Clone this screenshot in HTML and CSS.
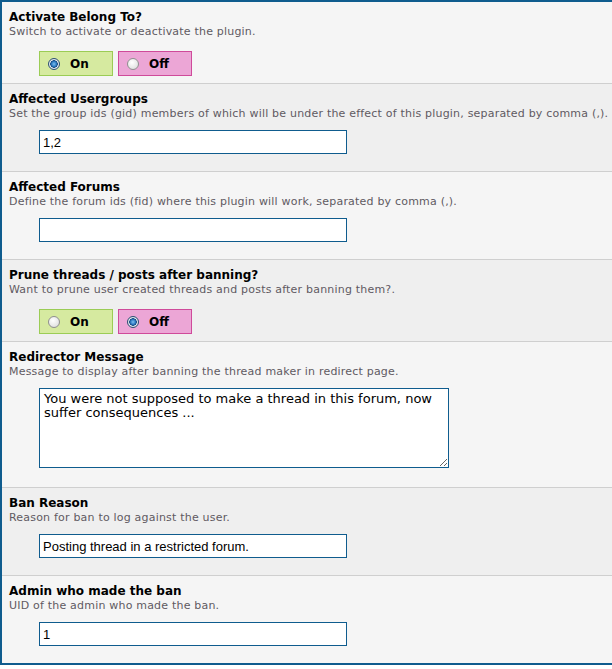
FILE: index.html
```html
<!DOCTYPE html>
<html lang="en">

<head>
    <meta charset="UTF-8">
    <meta name="viewport" content="width=device-width, initial-scale=1.0">
    <title>Plugin Settings</title>
    <link rel="stylesheet" href="styles.css">
</head>

<body>
    <form class="settings">
        <div class="row">
            <div class="title">Activate Belong To?</div>
            <div class="desc">Switch to activate or deactivate the plugin.</div>
            <div class="switch">
                <label class="choice on"><span class="radio checked"></span>On</label>
                <label class="choice off"><span class="radio"></span>Off</label>
            </div>
        </div>

        <div class="row">
            <div class="title">Affected Usergroups</div>
            <div class="desc">Set the group ids (gid) members of which will be under the effect of this plugin, separated by comma (,).</div>
            <input type="text" class="text-input" value="1,2">
        </div>

        <div class="row">
            <div class="title">Affected Forums</div>
            <div class="desc">Define the forum ids (fid) where this plugin will work, separated by comma (,).</div>
            <input type="text" class="text-input" value="">
        </div>

        <div class="row">
            <div class="title">Prune threads / posts after banning?</div>
            <div class="desc">Want to prune user created threads and posts after banning them?.</div>
            <div class="switch">
                <label class="choice on"><span class="radio"></span>On</label>
                <label class="choice off"><span class="radio checked"></span>Off</label>
            </div>
        </div>

        <div class="row">
            <div class="title">Redirector Message</div>
            <div class="desc">Message to display after banning the thread maker in redirect page.</div>
            <textarea class="text-area">You were not supposed to make a thread in this forum, now suffer consequences ...</textarea>
        </div>

        <div class="row">
            <div class="title">Ban Reason</div>
            <div class="desc">Reason for ban to log against the user.</div>
            <input type="text" class="text-input" value="Posting thread in a restricted forum.">
        </div>

        <div class="row">
            <div class="title">Admin who made the ban</div>
            <div class="desc">UID of the admin who made the ban.</div>
            <input type="text" class="text-input" value="1">
        </div>
    </form>
</body>

</html>
```

FILE: styles.css
```css
body {
    margin: 0;
    padding: 0;
    background-color: #fff;
    font-family: "DejaVu Sans", Verdana, sans-serif;
    overflow: hidden;
}

.settings {
    width: 640px;
    border-top: 2px solid #0f5c8e;
    border-left: 2px solid #0f5c8e;
    border-bottom: 2px solid #0f5c8e;
    box-shadow: 0 2px 0 #d4d4d4;
}

.row {
    padding: 8px 7px 6px;
    background-color: #f5f5f5;
    border-bottom: 1px solid #cfcfcf;
}

.row:nth-child(even) {
    background-color: #efefef;
}

.row:last-child {
    border-bottom: none;
}

.title {
    font-size: 12px;
    font-weight: bold;
    line-height: 15px;
    color: #000;
}

.desc {
    font-size: 11px;
    line-height: 13px;
    letter-spacing: 0.2px;
    color: #5f5a62;
    white-space: nowrap;
}

.switch {
    display: flex;
    gap: 5px;
    margin: 13px 0 1px 30px;
}

.choice {
    display: flex;
    align-items: center;
    box-sizing: border-box;
    width: 74px;
    height: 25px;
    padding-left: 8px;
    font-size: 12px;
    font-weight: bold;
    color: #000;
}

.choice.on {
    background-color: #d6eaa0;
    border: 1px solid #9bcc55;
}

.choice.off {
    background-color: #eca6d6;
    border: 1px solid #cf4a9a;
}

.radio {
    display: inline-block;
    box-sizing: border-box;
    width: 12px;
    height: 12px;
    margin-right: 10px;
    border: 1px solid #8f8f8f;
    border-radius: 50%;
    background: radial-gradient(circle at 40% 35%, #ffffff, #d8d8d8);
}

.radio.checked {
    border-color: #2c4f72;
    background: radial-gradient(circle, #7fc0f0 0, #2a78c0 2.5px, #14487e 3.5px, #e8eef4 4px, #c8d0d8 6px);
}

.text-input {
    display: block;
    box-sizing: border-box;
    width: 308px;
    height: 24px;
    margin: 10px 0 11px 30px;
    padding: 0 3px;
    border: 1px solid #0f5c8e;
    background-color: #fff;
    font-family: "Liberation Sans", Arial, sans-serif;
    font-size: 13px;
    color: #000;
    outline: none;
}

.text-area {
    display: block;
    box-sizing: border-box;
    width: 410px;
    height: 80px;
    margin: 10px 0 13px 30px;
    padding: 3px 4px;
    border: 1px solid #0f5c8e;
    background-color: #fff;
    font-family: "DejaVu Sans", Verdana, sans-serif;
    font-size: 13px;
    line-height: 14px;
    color: #000;
    outline: none;
}
```
